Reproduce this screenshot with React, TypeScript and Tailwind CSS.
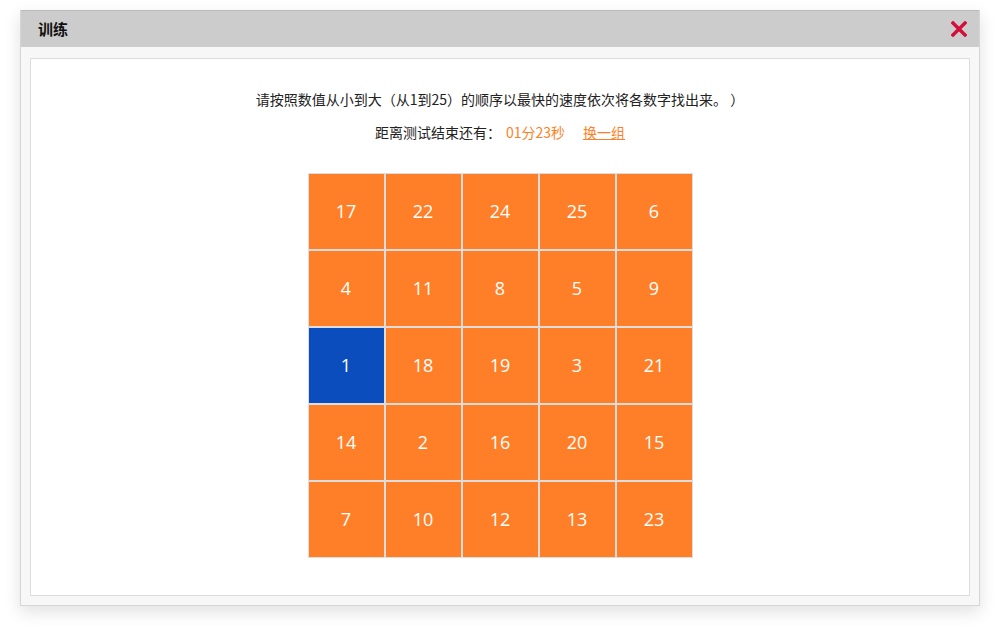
const numbers = [17, 22, 24, 25, 6, 4, 11, 8, 5, 9, 1, 18, 19, 3, 21, 14, 2, 16, 20, 15, 7, 10, 12, 13, 23]

const cjk = { fontFamily: '"Noto Sans CJK SC", "Noto Sans", sans-serif' }

export default function App() {
  return (
    <div className="w-[1000px] h-[635px] bg-white pt-[10px] px-[20px]" style={cjk}>
      <div className="w-[960px] h-[596px] bg-[#f7f7f7] border border-[#d6d6d6] border-t-0 shadow-[0_6px_16px_rgba(0,0,0,0.12)] flex flex-col">
        {/* header */}
        <div className="h-[37px] bg-[#cccccc] border-t border-[#bbbbbb] flex items-center justify-between pl-[17px] pr-[12px]">
          <span className="text-[15px] font-bold text-[#111]">训练</span>
          <svg width="16" height="16" viewBox="0 0 16 16">
            <path d="M2 2 L14 14 M14 2 L2 14" stroke="#d0103a" strokeWidth="3.4" strokeLinecap="square" />
          </svg>
        </div>

        {/* body */}
        <div className="flex-1 px-[9px] pt-[11px] pb-[9px]">
          <div className="h-full bg-white border border-[#dddddd] flex flex-col items-center pt-[30px]">
            <p className="text-[14px] leading-[20px] text-[#222]">
              请按照数值从小到大（从1到25）的顺序以最快的速度依次将各数字找出来。&nbsp;）
            </p>
            <div className="mt-[13px] text-[14px] leading-[20px] text-[#222] flex items-center">
              <span>距离测试结束还有：</span>
              <span className="ml-[5px] text-[#ff7f27]">01分23秒</span>
              <span className="ml-[18px] text-[#ff7f27] underline">换一组</span>
            </div>

            <div className="mt-[31px] grid grid-cols-5 w-[385px]">
              {numbers.map((n) => (
                <div
                  key={n}
                  className={
                    'h-[77px] border border-[#dddddd] flex items-center justify-center text-white text-[18px] ' +
                    (n === 1 ? 'bg-[#0b4dbd]' : 'bg-[#fe7f28]')
                  }
                  style={{ fontFamily: '"Open Sans", "Noto Sans", sans-serif' }}
                >
                  {n}
                </div>
              ))}
            </div>
          </div>
        </div>
      </div>
    </div>
  )
}
